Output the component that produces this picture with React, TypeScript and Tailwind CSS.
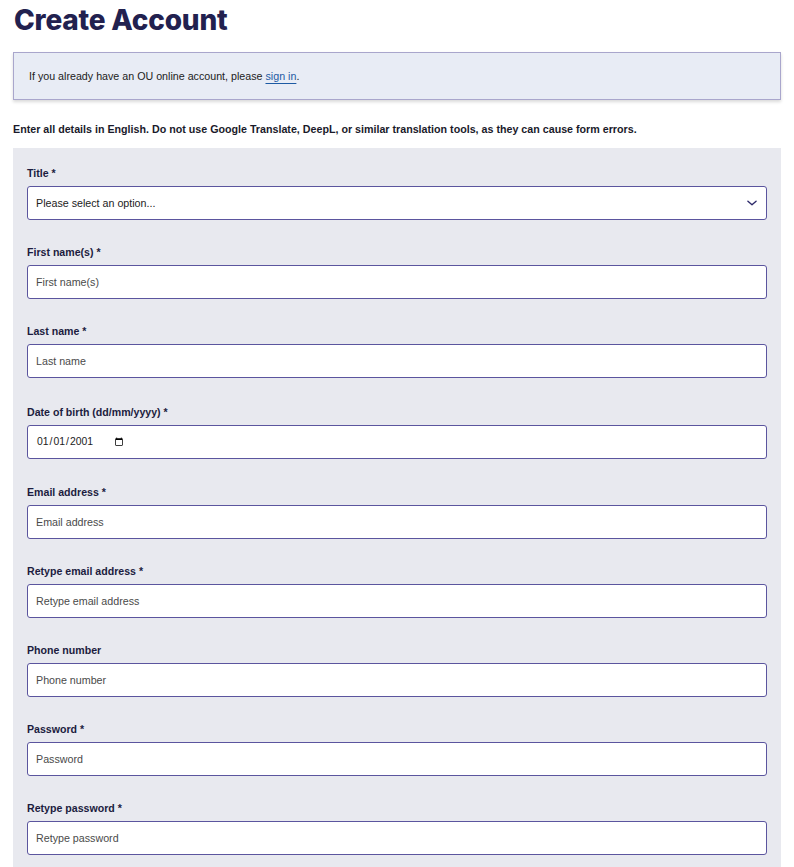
import React from 'react';

// Form field definitions, top to bottom as in the page
const FIELDS = [
  { label: 'First name(s) *', placeholder: 'First name(s)', type: 'text' },
  { label: 'Last name *', placeholder: 'Last name', type: 'text' },
  { label: 'Date of birth (dd/mm/yyyy) *', placeholder: '', type: 'date' },
  { label: 'Email address *', placeholder: 'Email address', type: 'email' },
  { label: 'Retype email address *', placeholder: 'Retype email address', type: 'email' },
  { label: 'Phone number', placeholder: 'Phone number', type: 'tel' },
  { label: 'Password *', placeholder: 'Password', type: 'password' },
  { label: 'Retype password *', placeholder: 'Retype password', type: 'password' },
];

const boxClass =
  "block w-full h-[34px] bg-white border border-[#5b559e] rounded-[3px] px-[8px] text-[10.7px] text-[#222] outline-none font-['Liberation_Sans',Arial,sans-serif]";
const inputClass = boxClass + ' placeholder:text-[#4a4a4a]';

const Label: React.FC<{ children: React.ReactNode }> = ({ children }) => (
  <label className="block text-[10.6px] leading-[16px] font-bold text-[#1c1c40] mb-[5px]">{children}</label>
);

export default function App() {
  return (
    <div className="min-h-screen bg-white font-['Liberation_Sans',Arial,sans-serif] text-[#1a1a1a] px-[13px]">
      <h1 className="pt-[3px] pl-[1px] text-[28px] leading-[34px] font-extrabold tracking-[-0.2px] text-[#22214f] font-['Inter',sans-serif]">
        Create Account
      </h1>

      <div className="mt-[15px] h-[48px] flex items-center bg-[#e8ecf5] border border-[#a9a6cc] shadow-[0_2px_3px_rgba(0,0,0,0.15)] px-[15px]">
        <p className="text-[10.7px] text-[#222]">
          If you already have an OU online account, please{' '}
          <a href="#" className="text-[#1d5aa3] underline underline-offset-[3px] decoration-[#1d5aa3]">
            sign in
          </a>
          .
        </p>
      </div>

      <p className="mt-[21px] text-[10.7px] leading-[16px] font-bold text-[#1a1a2a]">
        Enter all details in English. Do not use Google Translate, DeepL, or similar translation tools, as they can cause form errors.
      </p>

      <div className="mt-[11px] bg-[#e8e9ef] px-[14px] pt-[17px] pb-[24px] flex flex-col gap-[24px]">
        <div>
          <Label>Title *</Label>
          <div className="relative">
            <select className={inputClass + ' appearance-none pr-8'} defaultValue="">
              <option value="">Please select an option...</option>
              <option>Mr</option>
              <option>Mrs</option>
              <option>Ms</option>
              <option>Miss</option>
              <option>Dr</option>
            </select>
            <svg
              className="absolute right-[8px] top-1/2 -translate-y-1/2 pointer-events-none"
              width="14"
              height="14"
              viewBox="0 0 24 24"
              fill="none"
              stroke="#2d2a6a"
              strokeWidth="2.4"
              strokeLinecap="round"
              strokeLinejoin="round"
            >
              <path d="M5 9l7 6 7-6" />
            </svg>
          </div>
        </div>

        {FIELDS.map((f) => (
          <div key={f.label} className={f.type === 'date' ? 'pt-[2px] pb-[1px]' : ''}>
            <Label>{f.label}</Label>
            {f.type === 'date' ? (
              <div className={boxClass + ' flex items-center'}>
                <input
                  type="date"
                  defaultValue="2001-01-01"
                  className="bg-transparent outline-none text-[10.4px] text-[#222] font-['Liberation_Sans',Arial,sans-serif]"
                />
              </div>
            ) : (
              <input type={f.type} placeholder={f.placeholder} className={inputClass} />
            )}
          </div>
        ))}
      </div>
    </div>
  );
}
